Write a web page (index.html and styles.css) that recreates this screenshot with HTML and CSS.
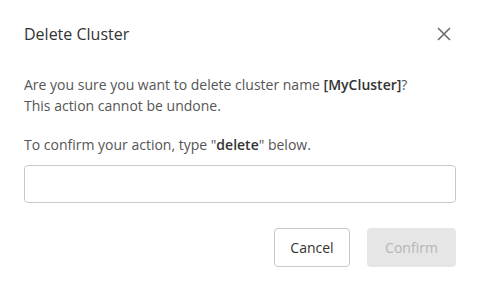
FILE: index.html
```html
<!DOCTYPE html>
<html>
<head>
<meta charset="utf-8">
<link rel="stylesheet" href="styles.css">
</head>
<body>
<div class="modal">
  <div class="header">
    <h2 class="title">Delete Cluster</h2>
    <button class="close" aria-label="Close">
      <svg width="14" height="14" viewBox="0 0 14 14"><path d="M1 1L13 13M13 1L1 13" stroke="#6b6b6b" stroke-width="1.6" fill="none"/></svg>
    </button>
  </div>
  <p class="msg">Are you sure you want to delete cluster name <b>[MyCluster]</b>?<br>This action cannot be undone.</p>
  <p class="confirm-text">To confirm your action, type "<b>delete</b>" below.</p>
  <input class="field" type="text">
  <div class="actions">
    <button class="btn cancel">Cancel</button>
    <button class="btn primary" disabled>Confirm</button>
  </div>
</div>
</body>
</html>
```
FILE: styles.css
```css
html, body { margin: 0; padding: 0; background: #fff; }
body { font-family: "Open Sans", "Noto Sans", sans-serif; color: #555; }
.modal { width: 479px; height: 292px; box-sizing: border-box; padding: 20px 23px 0 24px; }
.header { display: flex; justify-content: space-between; align-items: center; height: 28px; }
.title { margin: 0; font-size: 16px; font-weight: 500; color: #333; }
.close { border: 0; background: none; padding: 0; width: 14px; height: 14px; margin-right: 5px; display: flex; }
.msg { margin: 26px 0 0; font-size: 14px; line-height: 21px; }
.msg b, .confirm-text b { color: #333; font-weight: 600; }
.confirm-text { margin: 18px 0 0; font-size: 14px; line-height: 21px; }
.field { display: block; box-sizing: border-box; width: 432px; height: 38px; margin-top: 10px; border: 1px solid #c8c8c8; border-radius: 4px; }
.actions { display: flex; justify-content: flex-end; gap: 17px; margin-top: 25px; padding-right: 0; width: 432px; }
.btn { font-family: inherit; font-size: 14px; height: 39px; border-radius: 4px; padding: 0; }
.cancel { width: 76px; background: #fff; border: 1px solid #c8c8c8; color: #333; font-weight: 500; }
.primary { width: 89px; background: #e6e6e6; border: 0; color: #b5b5b5; }
```
